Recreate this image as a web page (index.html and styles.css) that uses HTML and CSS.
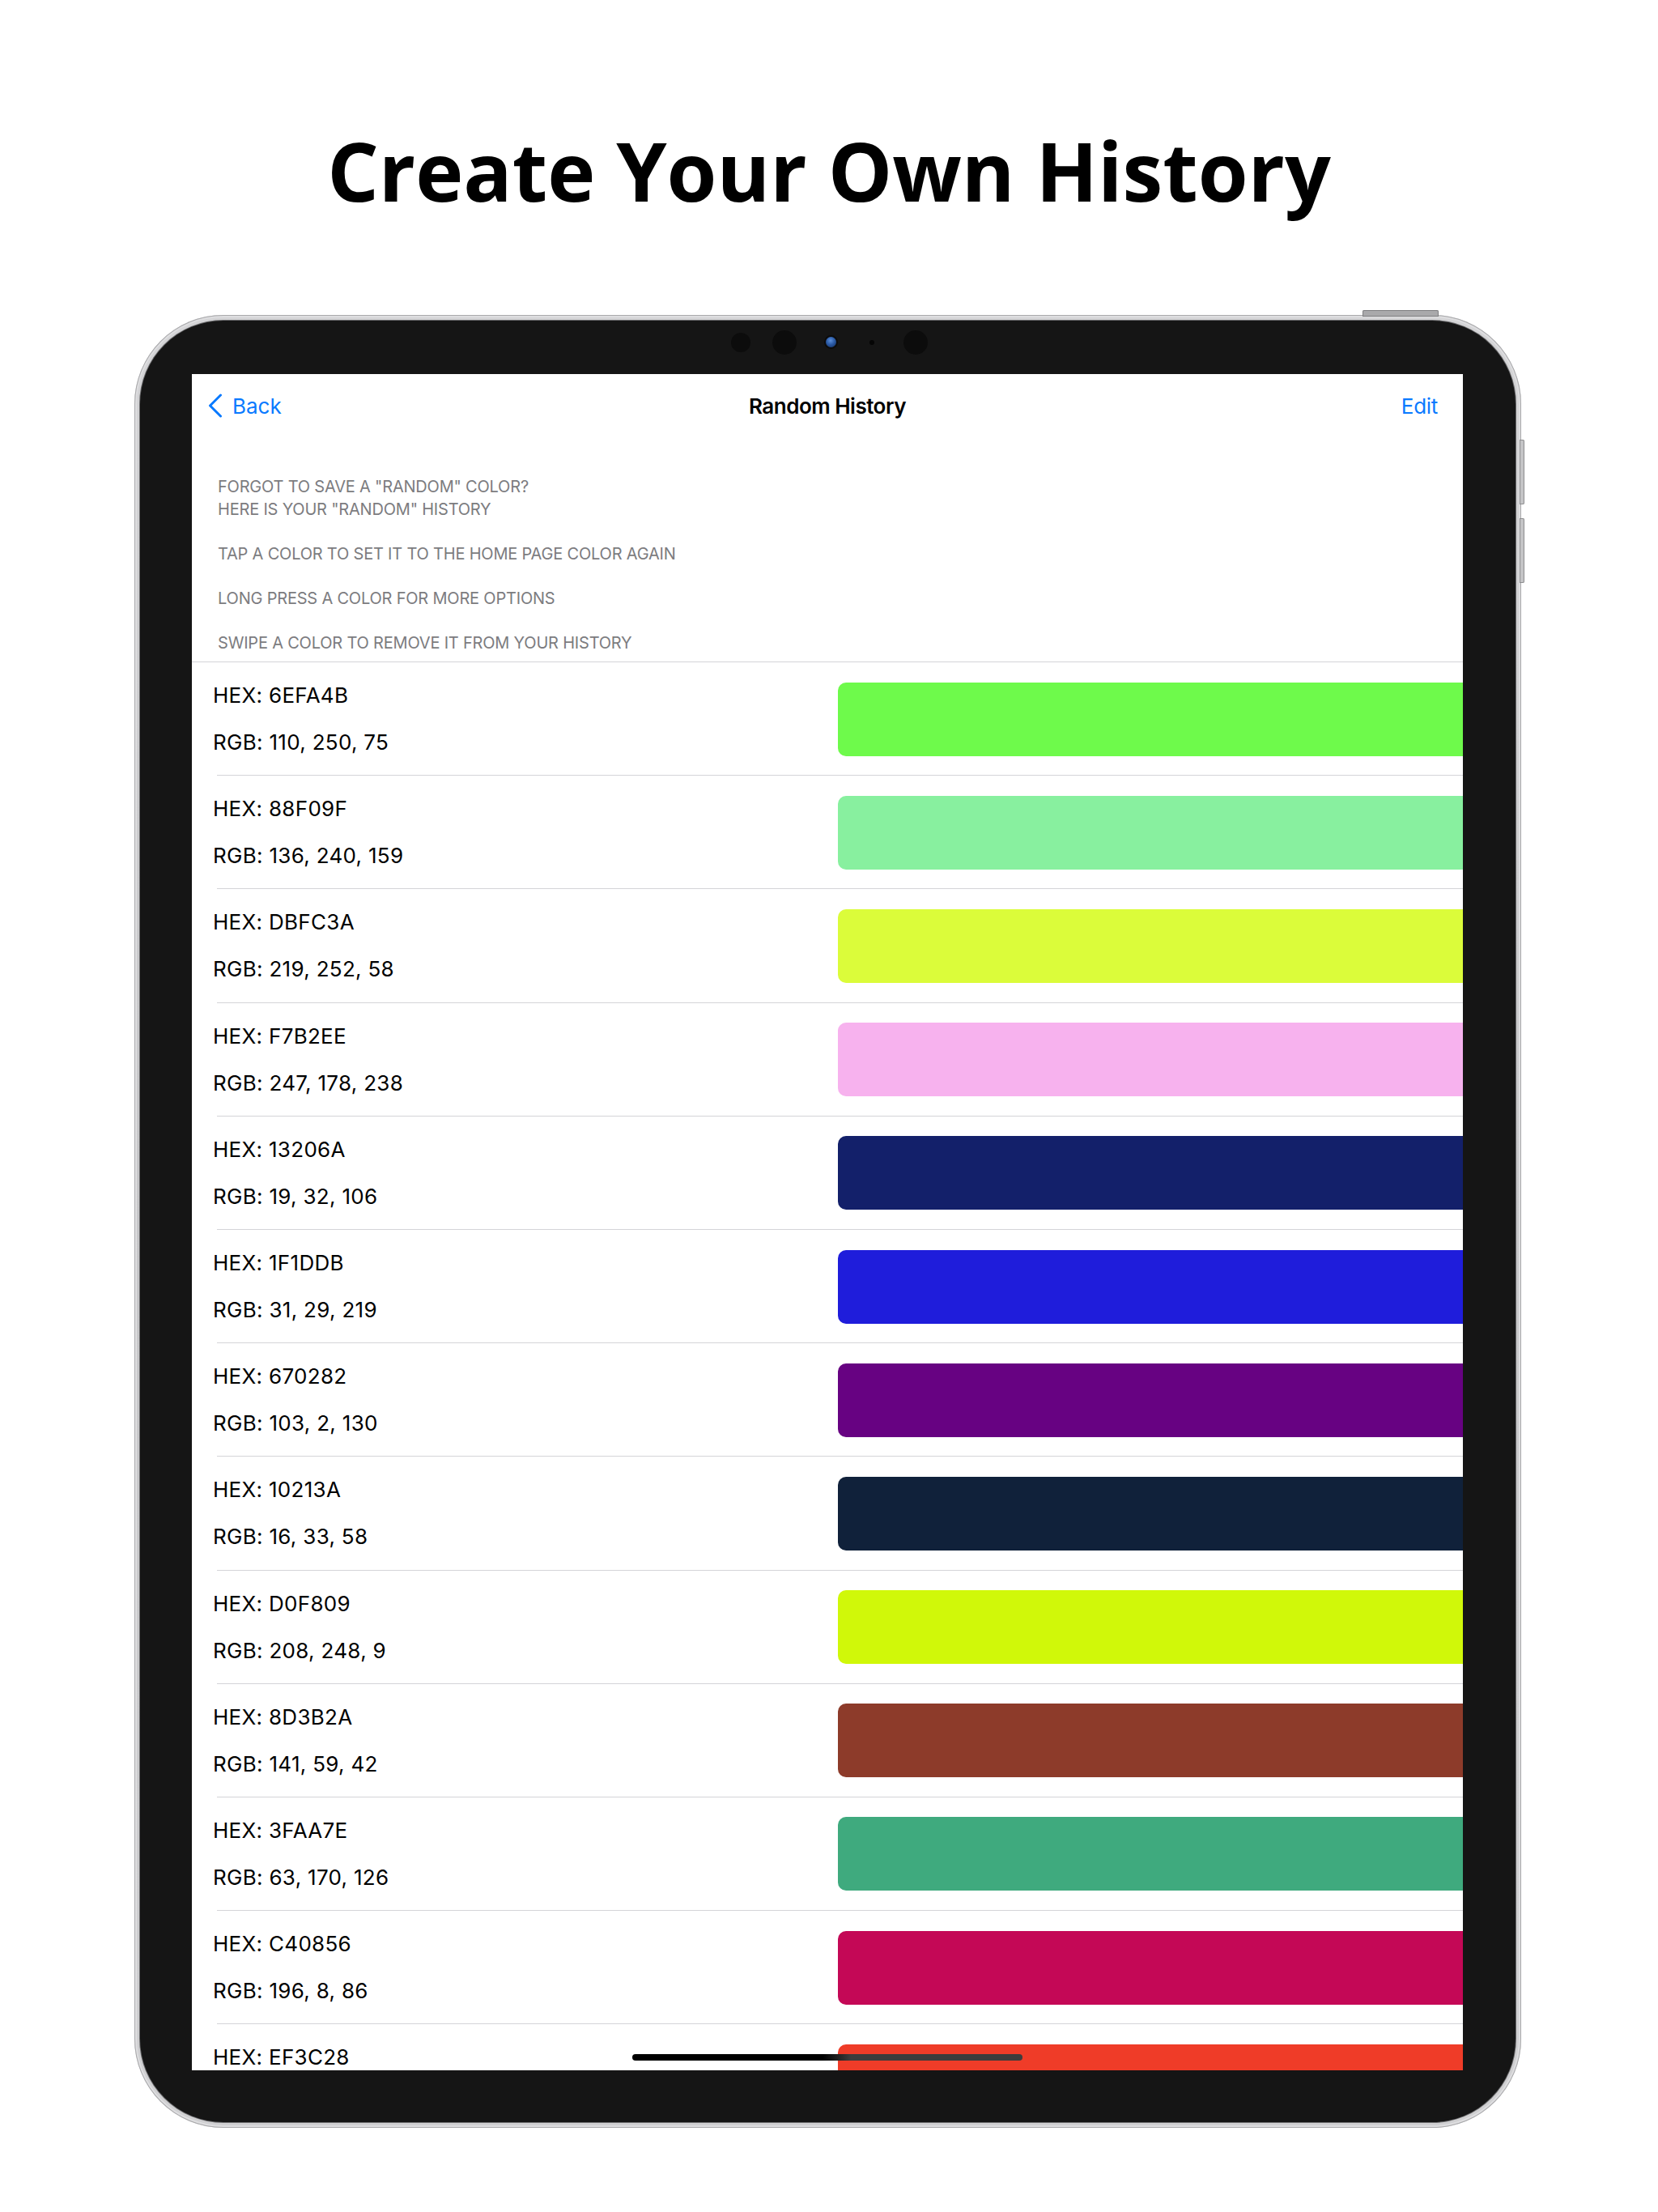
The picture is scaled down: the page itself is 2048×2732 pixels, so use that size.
FILE: index.html
```html
<!DOCTYPE html>
<html lang="en">
<head>
<meta charset="utf-8">
<title>Create Your Own History</title>
<link rel="stylesheet" href="styles.css">
</head>
<body>
<h1 class="headline">Create Your Own History</h1>
<div class="device">
  <span class="btn-top"></span>
  <span class="btn-side btn-side-1"></span>
  <span class="btn-side btn-side-2"></span>
  <div class="bezel">
    <span class="cam cam-1"></span>
    <span class="cam cam-2"></span>
    <span class="cam-lens"></span>
    <span class="cam-dot"></span>
    <span class="cam cam-3"></span>
    <div class="screen">
      <header class="nav">
        <a class="nav-back">
          <svg class="chevron" viewBox="0 0 18 30" width="18" height="30" aria-hidden="true">
            <polyline points="15.5,2 2.5,15 15.5,28" fill="none" stroke="currentColor" stroke-width="3" stroke-linecap="round" stroke-linejoin="round"/>
          </svg>
          <span>Back</span>
        </a>
        <span class="nav-title">Random History</span>
        <a class="nav-edit">Edit</a>
      </header>
      <section class="intro">
        <p>FORGOT TO SAVE A "RANDOM" COLOR?<br>HERE IS YOUR "RANDOM" HISTORY</p>
        <p>TAP A COLOR TO SET IT TO THE HOME PAGE COLOR AGAIN</p>
        <p>LONG PRESS A COLOR FOR MORE OPTIONS</p>
        <p>SWIPE A COLOR TO REMOVE IT FROM YOUR HISTORY</p>
      </section>
      <ul class="list">
        <li class="row"><div class="row-text"><span>HEX: 6EFA4B</span><span>RGB: 110, 250, 75</span></div><div class="swatch" style="background:#6EFA4B"></div></li>
        <li class="row"><div class="row-text"><span>HEX: 88F09F</span><span>RGB: 136, 240, 159</span></div><div class="swatch" style="background:#88F09F"></div></li>
        <li class="row"><div class="row-text"><span>HEX: DBFC3A</span><span>RGB: 219, 252, 58</span></div><div class="swatch" style="background:#DBFC3A"></div></li>
        <li class="row"><div class="row-text"><span>HEX: F7B2EE</span><span>RGB: 247, 178, 238</span></div><div class="swatch" style="background:#F7B2EE"></div></li>
        <li class="row"><div class="row-text"><span>HEX: 13206A</span><span>RGB: 19, 32, 106</span></div><div class="swatch" style="background:#13206A"></div></li>
        <li class="row"><div class="row-text"><span>HEX: 1F1DDB</span><span>RGB: 31, 29, 219</span></div><div class="swatch" style="background:#1F1DDB"></div></li>
        <li class="row"><div class="row-text"><span>HEX: 670282</span><span>RGB: 103, 2, 130</span></div><div class="swatch" style="background:#670282"></div></li>
        <li class="row"><div class="row-text"><span>HEX: 10213A</span><span>RGB: 16, 33, 58</span></div><div class="swatch" style="background:#10213A"></div></li>
        <li class="row"><div class="row-text"><span>HEX: D0F809</span><span>RGB: 208, 248, 9</span></div><div class="swatch" style="background:#D0F809"></div></li>
        <li class="row"><div class="row-text"><span>HEX: 8D3B2A</span><span>RGB: 141, 59, 42</span></div><div class="swatch" style="background:#8D3B2A"></div></li>
        <li class="row"><div class="row-text"><span>HEX: 3FAA7E</span><span>RGB: 63, 170, 126</span></div><div class="swatch" style="background:#3FAA7E"></div></li>
        <li class="row"><div class="row-text"><span>HEX: C40856</span><span>RGB: 196, 8, 86</span></div><div class="swatch" style="background:#C40856"></div></li>
        <li class="row"><div class="row-text"><span>HEX: EF3C28</span><span>RGB: 239, 60, 40</span></div><div class="swatch" style="background:#EF3C28"></div></li>
      </ul>
      <div class="home-indicator"></div>
    </div>
  </div>
</div>
</body>
</html>
```

FILE: styles.css
```css
html, body {
  margin: 0;
  padding: 0;
  background: #ffffff;
}

body {
  width: 2048px;
  min-height: 2732px;
}

.headline {
  margin: 0;
  padding-top: 140px;
  font-family: "Open Sans", "Noto Sans", sans-serif;
  font-weight: 700;
  font-size: 100px;
  line-height: 140px;
  text-align: center;
  color: #000;
}

/* ---------- device frame ---------- */
.device {
  position: relative;
  box-sizing: border-box;
  width: 1713px;
  height: 2239px;
  margin: 109px 0 0 166px;
  padding: 7px;
  border-radius: 110px;
  background: linear-gradient(180deg, #d4d4d6 0%, #c6c6c8 50%, #d0d0d2 100%);
  box-shadow: inset 0 0 0 1px #a9a9ab, inset 0 0 0 3px #dedee0;
}

.btn-top {
  position: absolute;
  left: 1517px;
  top: -6px;
  width: 94px;
  height: 8px;
  border-radius: 2px 2px 0 0;
  background: #a9a9ab;
  box-shadow: inset 0 0 0 1px #7e7e80;
}

.btn-side {
  position: absolute;
  left: 1711px;
  width: 6px;
  height: 80px;
  border-radius: 0 2px 2px 0;
  background: #c4c4c6;
  box-shadow: inset 0 0 0 1px #8e8e90;
}

.btn-side-1 { top: 154px; }
.btn-side-2 { top: 251px; }

.bezel {
  position: relative;
  box-sizing: border-box;
  height: 100%;
  padding: 66px 65px 64px 64px;
  border-radius: 103px;
  background: #151515;
  box-shadow: 0 0 0 1px #6c6c6e;
}

.cam {
  position: absolute;
  border-radius: 50%;
  background: #0c0c0c;
}

.cam-1 { left: 730px; top: 15px; width: 24px; height: 24px; }
.cam-2 { left: 781px; top: 12px; width: 30px; height: 30px; }
.cam-3 { left: 943px; top: 12px; width: 30px; height: 30px; }

.cam-lens {
  position: absolute;
  left: 847px;
  top: 20px;
  width: 13px;
  height: 13px;
  border-radius: 50%;
  background: radial-gradient(circle at 45% 35%, #5d8fd8 0%, #2a5aa6 45%, #112a55 100%);
  box-shadow: 0 0 0 2px #0b0b0b;
}

.cam-dot {
  position: absolute;
  left: 901px;
  top: 24px;
  width: 6px;
  height: 6px;
  border-radius: 50%;
  background: #050505;
}

/* ---------- screen ---------- */
.screen {
  position: relative;
  display: flex;
  flex-direction: column;
  width: 1570px;
  height: 2095px;
  overflow: hidden;
  background: #ffffff;
  font-family: "Inter", "Roboto", sans-serif;
}

.nav {
  flex-shrink: 0;
  display: grid;
  grid-template-columns: 1fr auto 1fr;
  align-items: center;
  height: 78px;
  font-size: 26px;
}

.nav-back {
  display: flex;
  align-items: center;
  gap: 12px;
  padding-left: 20px;
  color: #0a7aff;
}

.chevron {
  display: block;
}

.nav-title {
  font-weight: 600;
  letter-spacing: -0.5px;
  color: #000;
}

.nav-edit {
  justify-self: end;
  padding-right: 31px;
  letter-spacing: -0.3px;
  color: #0a7aff;
}

.intro {
  flex-shrink: 0;
  display: flex;
  flex-direction: column;
  gap: 27.5px;
  padding: 48px 31px 9px 32px;
  border-bottom: 1px solid #d4d4d8;
  font-size: 20px;
  line-height: 27.5px;
  letter-spacing: -0.2px;
  color: #7c7c80;
}

.intro p {
  margin: 0;
}

.list {
  margin: 0;
  padding: 0;
  list-style: none;
}

.row {
  box-sizing: border-box;
  display: flex;
  align-items: center;
  justify-content: space-between;
  height: 140.2px;
  background: linear-gradient(#d4d4d8, #d4d4d8) no-repeat left 31px bottom / calc(100% - 31px) 1px;
}

.row-text {
  display: flex;
  flex-direction: column;
  padding-left: 26px;
  font-size: 26px;
  line-height: 58px;
  letter-spacing: 0.3px;
  color: #000;
}

.swatch {
  flex-shrink: 0;
  width: 772px;
  height: 91px;
  border-radius: 10px 0 0 10px;
}

.home-indicator {
  position: absolute;
  left: 544px;
  top: 2075px;
  width: 482px;
  height: 8px;
  border-radius: 4px;
  background: linear-gradient(90deg, #000 0, #000 235px, #3c3c3c 270px, #3c3c3c 100%);
}
```
